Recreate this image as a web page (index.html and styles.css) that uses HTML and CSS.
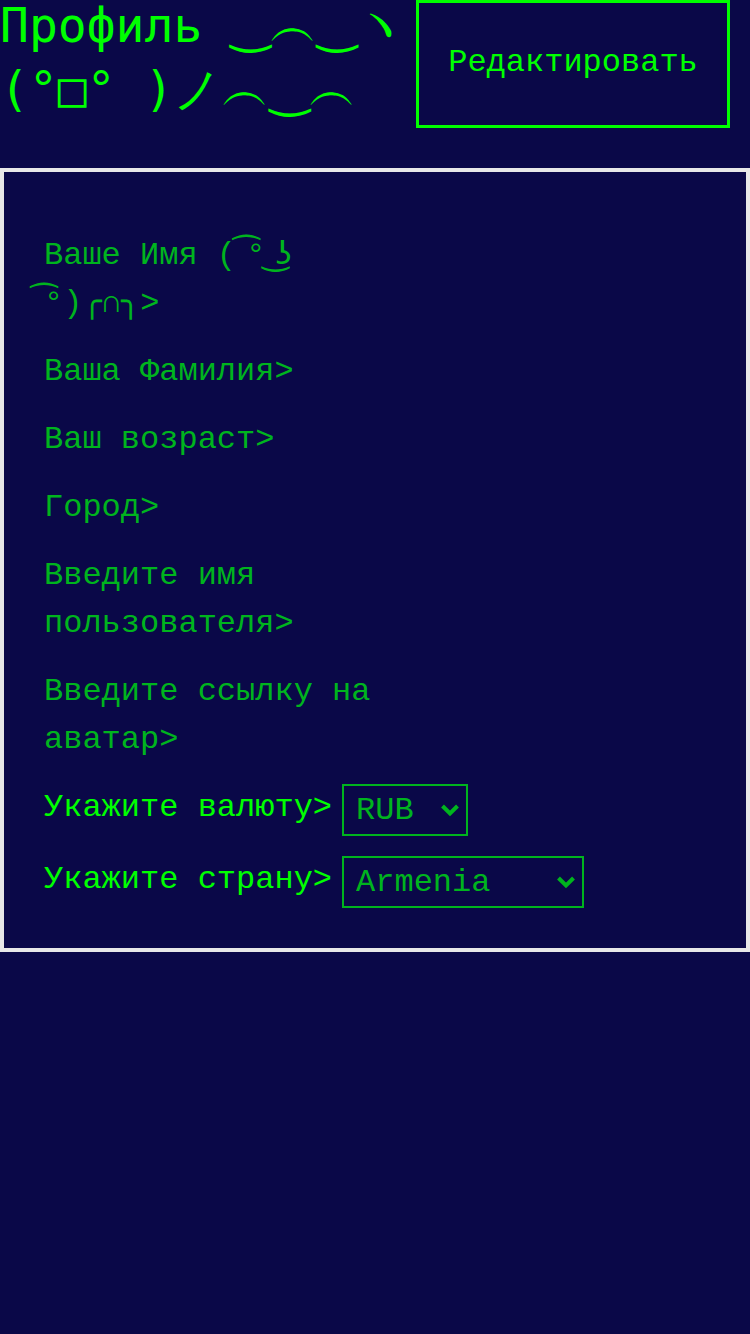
FILE: index.html
```html
<!DOCTYPE html>
<html lang="ru">
<head>
<meta charset="utf-8">
<title>Профиль</title>
<link rel="stylesheet" href="styles.css">
</head>
<body>
<header class="top">
  <h1 class="title">Профиль <span class="arc">‿︵‿ヽ</span>(°□° )<span class="arc">ノ︵‿︵</span></h1>
  <button class="edit" type="button">Редактировать</button>
</header>
<main class="card">
  <div class="field">Ваше Имя (<span class="dv"> ͡</span>°<span class="dv"> ͜ʖ</span><span class="dv"> ͡</span>°)╭∩╮&gt;</div>
  <div class="field">Ваша Фамилия&gt;</div>
  <div class="field">Ваш возраст&gt;</div>
  <div class="field">Город&gt;</div>
  <div class="field">Введите имя пользователя&gt;</div>
  <div class="field">Введите ссылку на аватар&gt;</div>
  <div class="pick">
    <span class="pick-label">Укажите валюту&gt;</span>
    <span class="select-wrap sw-cur">
      <select class="select"><option>RUB</option></select>
      <svg class="chev" viewBox="0 0 20 14" width="20" height="14"><path d="M2.5 3 L10 10.5 L17.5 3" fill="none" stroke="#00b41e" stroke-width="4"/></svg>
    </span>
  </div>
  <div class="pick">
    <span class="pick-label">Укажите страну&gt;</span>
    <span class="select-wrap sw-country">
      <select class="select"><option>Armenia</option></select>
      <svg class="chev" viewBox="0 0 20 14" width="20" height="14"><path d="M2.5 3 L10 10.5 L17.5 3" fill="none" stroke="#00b41e" stroke-width="4"/></svg>
    </span>
  </div>
</main>
</body>
</html>
```

FILE: styles.css
```css
html, body {
  margin: 0;
  padding: 0;
  background: #0a0848;
}
body {
  width: 750px;
  min-height: 1334px;
  font-family: "Liberation Mono", "DejaVu Sans", "Noto Sans CJK JP", monospace;
}
.top {
  display: flex;
  align-items: flex-start;
  margin-bottom: 40px;
}
.title {
  width: 416px;
  margin: -7px 0 0;
  font-family: "DejaVu Sans Mono", monospace;
  font-size: 48px;
  font-weight: normal;
  line-height: 64px;
  color: #00ff00;
}
.arc {
  font-family: "DejaVu Sans", sans-serif;
  line-height: 1;
}
.dv {
  font-family: "DejaVu Sans", sans-serif;
  line-height: 1;
}
.edit {
  width: 314px;
  height: 128px;
  padding: 0 0 4px;
  margin: 0;
  background: transparent;
  border: 3px solid #00ff00;
  color: #00ff00;
  font-family: "Liberation Mono", monospace;
  font-size: 32px;
}
.card {
  border: 4px solid #e8e8e8;
  padding: 60px 40px 40px;
  display: flex;
  flex-direction: column;
  gap: 20px;
}
.field {
  max-width: 350px;
  font-size: 32px;
  line-height: 48px;
  color: #00b41e;
}
.pick {
  display: flex;
  align-items: center;
  gap: 10px;
}
.pick-label {
  font-size: 32px;
  line-height: 48px;
  color: #00ff00;
  margin-top: -5px;
}
.select-wrap {
  position: relative;
  display: block;
}
.select {
  appearance: none;
  -webkit-appearance: none;
  display: block;
  height: 52px;
  margin: 0;
  padding: 0 0 0 12px;
  background: transparent;
  border: 2px solid #00b41e;
  border-radius: 0;
  color: #00b41e;
  font-family: "Liberation Mono", monospace;
  font-size: 32px;
}
.sw-cur .select { width: 126px; }
.sw-country .select { width: 242px; }
.chev {
  position: absolute;
  right: 8px;
  top: 19px;
  pointer-events: none;
}
```
